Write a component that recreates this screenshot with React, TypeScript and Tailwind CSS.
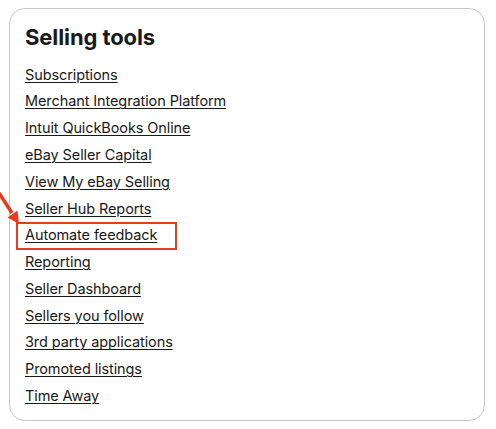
import React from 'react';

const links = [
  'Subscriptions',
  'Merchant Integration Platform',
  'Intuit QuickBooks Online',
  'eBay Seller Capital',
  'View My eBay Selling',
  'Seller Hub Reports',
  'Automate feedback',
  'Reporting',
  'Seller Dashboard',
  'Sellers you follow',
  '3rd party applications',
  'Promoted listings',
  'Time Away',
];

const App: React.FC = () => {
  return (
    <div className="relative w-[496px] h-[429px] bg-white pt-[8px] pl-[9px] font-['Inter',sans-serif] text-[#191919]">
      <div className="w-[476px] h-[413px] rounded-[16px] border border-[#c8c8c8] pt-[14px] pl-[15px]">
        <h2 className="text-[22px] leading-[28px] font-bold tracking-[-0.1px]">Selling tools</h2>
        <ul className="mt-[10px]">
          {links.map(label => (
            <li key={label} className="relative h-[26.8px] flex items-center">
              <a href="#" className="text-[14.5px] tracking-[-0.1px] underline underline-offset-2 decoration-1">
                {label}
              </a>
              {label === 'Automate feedback' && (
                <span className="absolute -left-[9px] top-0 w-[161px] h-[28px] border-2 border-[#e83c20]" />
              )}
            </li>
          ))}
        </ul>
      </div>

      {/* annotation arrow */}
      <svg className="absolute left-0 top-[188px]" width="24" height="40" viewBox="0 0 24 40">
        <line x1="-1" y1="5" x2="12" y2="25" stroke="#e83c20" strokeWidth="3.5" />
        <polygon points="19,36 7.5,29.5 17.5,22.5" fill="#e83c20" />
      </svg>
    </div>
  );
};

export default App;
